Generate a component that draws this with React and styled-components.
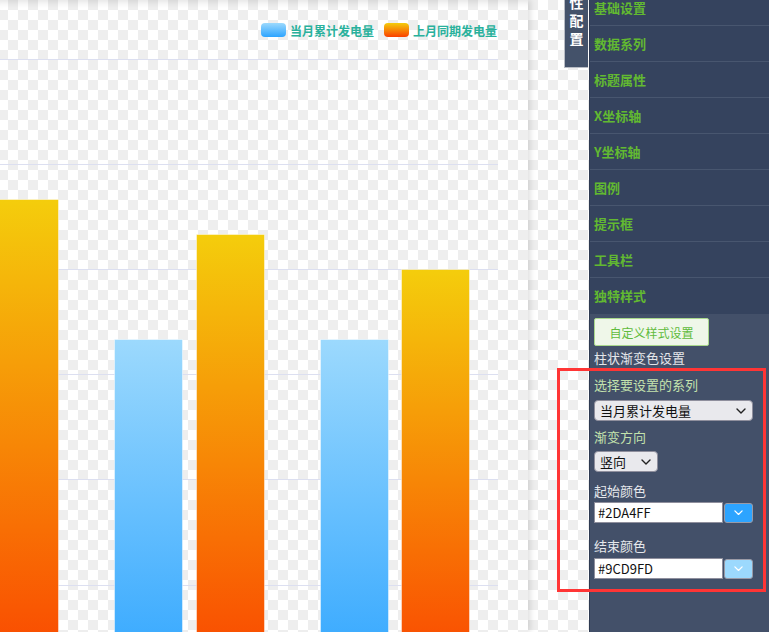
import React from "react";
import styled, { createGlobalStyle } from "styled-components";

const GlobalStyle = createGlobalStyle`
  html, body {
    margin: 0;
    padding: 0;
    height: 100%;
    overflow: hidden;
  }
  body {
    font-family: "Noto Sans CJK SC", "Noto Sans", sans-serif;
    font-size: 13px;
  }
`;

const menuItems = [
  "基础设置",
  "数据系列",
  "标题属性",
  "X坐标轴",
  "Y坐标轴",
  "图例",
  "提示框",
  "工具栏",
  "独特样式",
];

// bars of the series, x / top in plot coordinates
const bars = [
  { x: -10, top: 140, kind: "last" },
  { x: 114, top: 280, kind: "current" },
  { x: 196, top: 175, kind: "last" },
  { x: 320, top: 280, kind: "current" },
  { x: 401, top: 210, kind: "last" },
];

const gridLines = [0, 105, 210, 315, 420, 526];
const AXIS_Y = 631;

function BarChart() {
  return (
    <svg width="528" height="573" viewBox="0 0 528 573">
      <defs>
        <linearGradient id="gradCurrent" x1="0" y1="0" x2="0" y2="1">
          <stop offset="0" stopColor="#9CD9FD" />
          <stop offset="1" stopColor="#2DA4FF" />
        </linearGradient>
        <linearGradient id="gradLast" x1="0" y1="0" x2="0" y2="1">
          <stop offset="0" stopColor="#F4CD0C" />
          <stop offset="1" stopColor="#FA4000" />
        </linearGradient>
      </defs>
      {gridLines.map((y) => (
        <line
          key={y}
          x1="0"
          x2="498"
          y1={y + 0.5}
          y2={y + 0.5}
          stroke="#dcdff0"
          strokeWidth="1"
        />
      ))}
      {bars.map((b, i) => (
        <rect
          key={i}
          x={b.x + 0.5}
          y={b.top + 0.5}
          width="68"
          height={AXIS_Y - b.top}
          fill={b.kind === "current" ? "url(#gradCurrent)" : "url(#gradLast)"}
          stroke="rgba(255,255,255,0.45)"
          strokeWidth="1"
        />
      ))}
    </svg>
  );
}

function Chevron({ color = "#222", size = 10 }) {
  return (
    <svg width={size} height={size * 0.6} viewBox="0 0 10 6">
      <path
        d="M1 1 L5 5 L9 1"
        fill="none"
        stroke={color}
        strokeWidth="1.4"
        strokeLinecap="round"
        strokeLinejoin="round"
      />
    </svg>
  );
}

function App() {
  return (
    <>
      <GlobalStyle />
      <Page>
        <ChartPanel>
          <Legend>
            <LegendItem>
              <Swatch $from="#9CD9FD" $to="#2DA4FF" />
              当月累计发电量
            </LegendItem>
            <LegendItem>
              <Swatch $from="#F4CD0C" $to="#FA4000" />
              上月同期发电量
            </LegendItem>
          </Legend>
          <Plot>
            <BarChart />
          </Plot>
        </ChartPanel>
        <Gutter />
        <Sidebar>
          <ConfigTab>
            <span>性</span>
            <span>配</span>
            <span>置</span>
          </ConfigTab>
          <Menu>
            {menuItems.map((item) => (
              <MenuItem key={item}>{item}</MenuItem>
            ))}
          </Menu>
          <StylePanel>
            <CustomButton>自定义样式设置</CustomButton>
            <PanelTitle>柱状渐变色设置</PanelTitle>
            <FieldLabel $gap={7} $accent>
              选择要设置的系列
            </FieldLabel>
            <SelectBox $gap={5} $width={159}>
              当月累计发电量
              <Chevron />
            </SelectBox>
            <FieldLabel $gap={6} $accent>
              渐变方向
            </FieldLabel>
            <SelectBox $gap={4} $width={64}>
              竖向
              <Chevron />
            </SelectBox>
            <FieldLabel $gap={9}>起始颜色</FieldLabel>
            <ColorRow $gap={1}>
              <ColorInput>#2DA4FF</ColorInput>
              <ColorPick $color="#2DA4FF">
                <Chevron color="#ffffff" size={9} />
              </ColorPick>
            </ColorRow>
            <FieldLabel $gap={13}>结束颜色</FieldLabel>
            <ColorRow $gap={2}>
              <ColorInput>#9CD9FD</ColorInput>
              <ColorPick $color="#9CD9FD">
                <Chevron color="#ffffff" size={9} />
              </ColorPick>
            </ColorRow>
          </StylePanel>
        </Sidebar>
        <Highlight />
      </Page>
    </>
  );
}

const Page = styled.div`
  position: relative;
  display: flex;
  height: 632px;
  width: 769px;
  overflow: hidden;
  background-color: #ffffff;
  background-image: conic-gradient(
    #eeeeee 25%,
    #ffffff 0 50%,
    #eeeeee 0 75%,
    #ffffff 0
  );
  background-size: 20px 20px;
  background-position: -2px 0;
`;

const ChartPanel = styled.div`
  width: 528px;
  flex-shrink: 0;
  display: flex;
  flex-direction: column;
  box-shadow: 2px 0 6px rgba(0, 0, 0, 0.14), inset 0 8px 7px -6px rgba(0, 0, 0, 0.12);
`;

const Legend = styled.div`
  height: 59px;
  box-sizing: border-box;
  padding: 23px 31px 0 0;
  display: flex;
  justify-content: flex-end;
  align-items: flex-start;
  gap: 10px;
`;

const LegendItem = styled.div`
  display: flex;
  align-items: center;
  gap: 4px;
  height: 14px;
  font-size: 12px;
  font-weight: 700;
  color: #29b19c;
  white-space: nowrap;
`;

const Swatch = styled.span`
  width: 25px;
  height: 14px;
  border-radius: 4px;
  background: linear-gradient(${(p) => p.$from}, ${(p) => p.$to});
`;

const Plot = styled.div`
  flex: 1;
  overflow: hidden;

  svg {
    display: block;
  }
`;

const Gutter = styled.div`
  flex: 1;
`;

const Sidebar = styled.div`
  position: relative;
  width: 180px;
  flex-shrink: 0;
  display: flex;
  flex-direction: column;
  background: #435069;
  border-left: 1px solid #2f3b52;
  box-sizing: border-box;
`;

const ConfigTab = styled.div`
  position: absolute;
  left: -26px;
  top: 0;
  width: 24px;
  height: 68px;
  box-sizing: border-box;
  display: flex;
  flex-direction: column;
  align-items: center;
  justify-content: flex-end;
  padding-bottom: 20px;
  background: #44526a;
  border-left: 1px solid #b8bcc4;
  border-bottom: 1px solid #b8bcc4;
  color: #ffffff;
  font-size: 14px;
  font-weight: 700;
  line-height: 18px;
`;

const Menu = styled.div`
  margin-top: -10px;
  background: #35435e;
`;

const MenuItem = styled.div`
  height: 36px;
  box-sizing: border-box;
  display: flex;
  align-items: center;
  padding: 0 0 1px 4px;
  border-bottom: 1px solid #48566f;
  color: #62b931;
  font-size: 13px;
  font-weight: 700;

  &:last-child {
    border-bottom: none;
  }
`;

const StylePanel = styled.div`
  padding: 4px 4px 0 4px;
  display: flex;
  flex-direction: column;
  align-items: flex-start;
`;

const CustomButton = styled.div`
  width: 115px;
  height: 28px;
  box-sizing: border-box;
  display: flex;
  align-items: center;
  justify-content: center;
  background: #eff7e9;
  border: 1px solid #a9d88c;
  border-radius: 2px;
  color: #5fbb3c;
  font-size: 12px;
`;

const PanelTitle = styled.div`
  margin-top: 2px;
  line-height: 20px;
  color: #e4e6ea;
  font-size: 13px;
`;

const FieldLabel = styled.div`
  margin-top: ${(p) => p.$gap}px;
  line-height: 20px;
  font-size: 13px;
  color: ${(p) => (p.$accent ? "#c3e2ad" : "#e6e8ec")};
`;

const SelectBox = styled.div`
  margin-top: ${(p) => p.$gap}px;
  width: ${(p) => p.$width}px;
  height: 21px;
  box-sizing: border-box;
  display: flex;
  align-items: center;
  justify-content: space-between;
  padding: 0 6px 0 5px;
  background: #e9e9ed;
  border: 1px solid #8f8f9d;
  border-radius: 4px;
  color: #111111;
  font-size: 13px;
`;

const ColorRow = styled.div`
  margin-top: ${(p) => p.$gap}px;
  display: flex;
  align-items: center;
  gap: 1px;
`;

const ColorInput = styled.div`
  width: 129px;
  height: 21px;
  box-sizing: border-box;
  display: flex;
  align-items: center;
  padding-left: 3px;
  background: #ffffff;
  border: 1px solid #8f8f9d;
  color: #111111;
  font-size: 13px;
`;

const ColorPick = styled.div`
  width: 29px;
  height: 20px;
  box-sizing: border-box;
  display: flex;
  align-items: center;
  justify-content: center;
  background: ${(p) => p.$color};
  border: 1px solid #9a9aa6;
  border-radius: 3px;
`;

const Highlight = styled.div`
  position: absolute;
  left: 557px;
  top: 368px;
  width: 209px;
  height: 224px;
  box-sizing: border-box;
  border: 3px solid #ff3535;
  pointer-events: none;
`;

export default App;
